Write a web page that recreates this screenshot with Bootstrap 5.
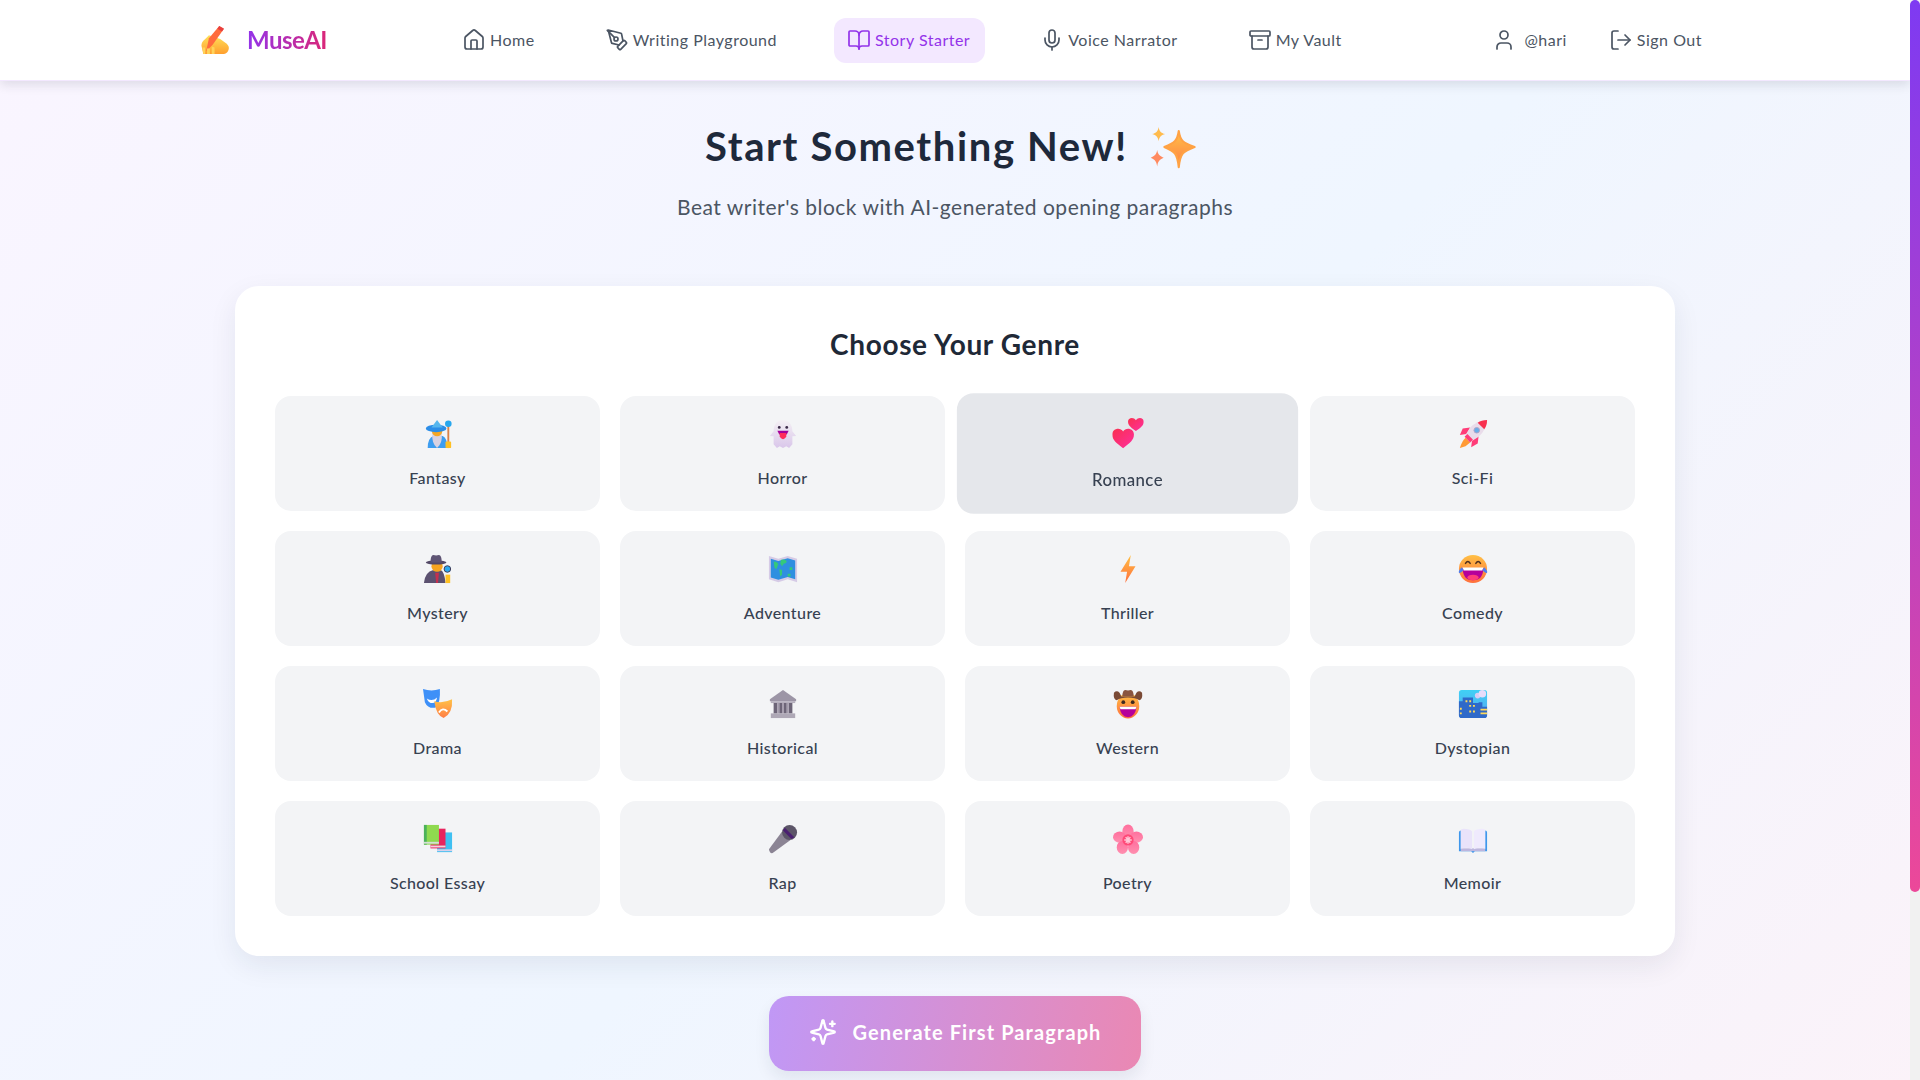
<!DOCTYPE html>
<html lang="en">
<head>
<meta charset="utf-8">
<title>MuseAI</title>
<link href="https://cdn.jsdelivr.net/npm/bootstrap@5.3.0/dist/css/bootstrap.min.css" rel="stylesheet">
<style>
::-webkit-scrollbar{display:none}
body{font-family:"Lato","Liberation Sans",sans-serif;background:linear-gradient(135deg,#faf5ff 0%,#eff6ff 50%,#fdf2f8 100%);min-height:1308px;color:#1f2937;padding-right:10px}
.svg-defs{position:absolute;width:0;height:0}
.scroll-rail{position:fixed;top:0;right:0;bottom:0;width:10px;background:#f1f1f1;z-index:10}
.scroll-thumb{height:892px;border-radius:5px;background:linear-gradient(180deg,#7e3af2,#ec4899)}
.top-bar{height:81px;background:#fff;border-bottom:1px solid #f3e8ff;box-shadow:0 4px 10px rgba(30,41,59,.12);position:relative}
.bar-inner{max-width:1536px;height:80px;padding:0 6px 0 13px}
.brand-mark{width:31px;height:30px}
.brand-word{font-size:24px;font-weight:700;letter-spacing:-.5px;background:linear-gradient(90deg,#9333ea,#db2777);-webkit-background-clip:text;background-clip:text;color:transparent;line-height:1}
.menu-group{gap:42px}
.user-group{gap:14px}
.menu-link{display:flex;align-items:center;gap:4px;height:45px;padding:0 15px 0 13px;border-radius:12px;color:#4b5563;font-size:16px;letter-spacing:.5px;text-decoration:none;white-space:nowrap}
.menu-link svg{width:24px;height:24px;flex:none}
.menu-link.is-current{background:#f3e8ff;color:#9333ea}
.page-head{padding-top:35px;height:205px}
.page-title{font-size:40px;font-weight:700;line-height:60px;color:#1e293b;margin:0;letter-spacing:1.6px}
.page-title svg{width:46px;height:46px;margin:0 9px 0 22px;vertical-align:-9px}
.page-sub{font-size:21px;letter-spacing:.5px;line-height:28px;color:#4b5563;margin:17px 0 0}
.genre-panel{width:1440px;background:#fff;border-radius:24px;padding:40px;box-shadow:0 10px 28px rgba(30,41,59,.08)}
.panel-title{font-size:28px;font-weight:700;letter-spacing:.65px;line-height:36px;margin:0 0 34px;color:#1f2937;text-align:center}
.genre-grid{display:grid;grid-template-columns:repeat(4,1fr);gap:20px}
.genre-tile{height:115px;background:#f3f4f6;border:0;border-radius:16px;padding:23px 0 0;display:flex;flex-direction:column;align-items:center;color:#374151;font-size:16px;font-weight:500;letter-spacing:.4px}
.genre-tile svg{width:30px;height:30px;flex:none}
.genre-tile span{line-height:24px;margin-top:17px}
.genre-tile.is-hover{background:#e5e7eb;transform:scale(1.05)}
.go-btn{display:flex;align-items:center;justify-content:center;gap:16px;width:372px;height:75px;margin:40px auto 236px;padding:0 0 3px;border:0;border-radius:20px;background:linear-gradient(100deg,#c098f6,#ea88b3);color:#fff;font-size:20px;font-weight:700;letter-spacing:1.1px;box-shadow:0 8px 16px rgba(30,41,59,.08)}
.go-btn svg{width:28px;height:28px}
</style>
</head>
<body>
<svg class="svg-defs" aria-hidden="true"><defs>
<linearGradient id="gY" x1="0" y1="0" x2="0" y2="1"><stop offset="0" stop-color="#ffe15a"/><stop offset="1" stop-color="#ff9f2e"/></linearGradient>
<linearGradient id="gO" x1="0" y1="0" x2="0" y2="1"><stop offset="0" stop-color="#ffc045"/><stop offset="1" stop-color="#ff6f3c"/></linearGradient>
<linearGradient id="gH" x1="0" y1="0" x2="1" y2="1"><stop offset="0" stop-color="#f9304f"/><stop offset="1" stop-color="#ff2fa0"/></linearGradient>
<linearGradient id="gG" x1="0" y1="0" x2="0" y2="1"><stop offset="0" stop-color="#f4f0f4"/><stop offset="1" stop-color="#d9c6ea"/></linearGradient>
<linearGradient id="gP" x1="0" y1="0" x2="0" y2="1"><stop offset="0" stop-color="#ff6f9d"/><stop offset="1" stop-color="#ff8fb0"/></linearGradient>
<linearGradient id="gS" x1="0" y1="0" x2="0" y2="1"><stop offset="0" stop-color="#ffc247"/><stop offset="1" stop-color="#ff7d45"/></linearGradient>
<linearGradient id="gB" x1="0" y1="0" x2="0" y2="1"><stop offset="0" stop-color="#3fd0f5"/><stop offset="1" stop-color="#5aa5f0"/></linearGradient>
</defs></svg>

<div class="scroll-rail"><div class="scroll-thumb"></div></div>

<nav class="top-bar">
  <div class="bar-inner mx-auto d-flex align-items-center justify-content-between">
    <a class="d-flex align-items-center gap-3 text-decoration-none" href="#">
      <svg class="brand-mark" viewBox="0 0 32 32"><path d="M3 31 1 22q0-4 4-7l4-4 12 4 7 5q3 3 2 6-1 4-5 5H8Z" fill="url(#gY)"/><path d="M6 28 9 14 20 1l5 3-12 17Z" fill="#ff6b3d"/><path d="M20 1l5 3-2 3-5-3Z" fill="#e83f3f"/><path d="M2 24h3v7H3Zm5 1h3v6H7Zm5-2 3 1v7h-3Z" fill="#ffd35a"/></svg>
      <span class="brand-word">MuseAI</span>
    </a>
    <div class="menu-group d-flex align-items-center">
      <a class="menu-link" href="#"><svg viewBox="0 0 24 24" fill="none" stroke="currentColor" stroke-width="1.700" stroke-linecap="round" stroke-linejoin="round"><path d="M15 21v-8a1 1 0 0 0-1-1h-4a1 1 0 0 0-1 1v8"/><path d="M3 10a2 2 0 0 1 .7-1.5l7-6a2 2 0 0 1 2.600 0l7 6A2 2 0 0 1 21 10v9a2 2 0 0 1-2 2H5a2 2 0 0 1-2-2z"/></svg>Home</a>
      <a class="menu-link" href="#"><svg viewBox="0 0 24 24" fill="none" stroke="currentColor" stroke-width="1.700" stroke-linecap="round" stroke-linejoin="round"><path d="M15.700 21.300a1 1 0 0 1-1.400 0l-1.600-1.600a1 1 0 0 1 0-1.400l5.600-5.600a1 1 0 0 1 1.400 0l1.600 1.600a1 1 0 0 1 0 1.400z"/><path d="m18 13-1.400-6.900a1 1 0 0 0-.7-.8L3.200 2l3.300 12.700a1 1 0 0 0 .8.7L14 17"/><path d="m2.300 2.300 7.300 7.300"/><circle cx="11" cy="11" r="2"/></svg>Writing Playground</a>
      <a class="menu-link is-current" href="#"><svg viewBox="0 0 24 24" fill="none" stroke="currentColor" stroke-width="1.700" stroke-linecap="round" stroke-linejoin="round"><path d="M12 7v14"/><path d="M3 18a1 1 0 0 1-1-1V4a1 1 0 0 1 1-1h5a4 4 0 0 1 4 4 4 4 0 0 1 4-4h5a1 1 0 0 1 1 1v13a1 1 0 0 1-1 1h-6a3 3 0 0 0-3 3 3 3 0 0 0-3-3z"/></svg>Story Starter</a>
      <a class="menu-link" href="#"><svg viewBox="0 0 24 24" fill="none" stroke="currentColor" stroke-width="1.700" stroke-linecap="round" stroke-linejoin="round"><path d="M12 2a3 3 0 0 0-3 3v7a3 3 0 0 0 6 0V5a3 3 0 0 0-3-3Z"/><path d="M19 10v2a7 7 0 0 1-14 0v-2"/><path d="M12 19v3"/></svg>Voice Narrator</a>
      <a class="menu-link" href="#"><svg viewBox="0 0 24 24" fill="none" stroke="currentColor" stroke-width="1.700" stroke-linecap="round" stroke-linejoin="round"><rect x="2" y="3" width="20" height="5" rx="1"/><path d="M4 8v11a2 2 0 0 0 2 2h12a2 2 0 0 0 2-2V8"/><path d="M10 12h4"/></svg>My Vault</a>
    </div>
    <div class="user-group d-flex align-items-center">
      <a class="menu-link" href="#"><svg viewBox="0 0 24 24" fill="none" stroke="currentColor" stroke-width="1.700" stroke-linecap="round" stroke-linejoin="round"><path d="M19 21v-2a4 4 0 0 0-4-4H9a4 4 0 0 0-4 4v2"/><circle cx="12" cy="7" r="4"/></svg>&nbsp;@hari</a>
      <a class="menu-link" href="#"><svg viewBox="0 0 24 24" fill="none" stroke="currentColor" stroke-width="1.700" stroke-linecap="round" stroke-linejoin="round"><path d="M9 21H5a2 2 0 0 1-2-2V5a2 2 0 0 1 2-2h4"/><path d="m16 17 5-5-5-5"/><path d="M21 12H9"/></svg>Sign Out</a>
    </div>
  </div>
</nav>

<main>
  <header class="page-head text-center">
    <h1 class="page-title">Start Something New!<svg viewBox="0 0 32 32"><path d="M20 5c1 7 3 8 11 11-8 3-10 4-11 14-1-10-3-11-10-14 7-3 9-4 10-11Z" fill="url(#gS)" stroke="#ffa244" stroke-width="1.500" stroke-linejoin="round"/><path d="M6 2c.5 3 1.500 4 4.500 5-3 1-4 2-4.500 5-.5-3-1.500-4-4.500-5 3-1 4-2 4.500-5Z" fill="#ffbb4d"/><path d="M5 18c.5 3 1.500 4 4.500 5.500-3 1.500-4 2.500-4.500 6-.5-3.500-1.500-4.500-4.500-6 3-1.500 4-2.500 4.500-5.500Z" fill="#ff8a60"/></svg></h1>
    <p class="page-sub">Beat writer's block with AI-generated opening paragraphs</p>
  </header>

  <section class="genre-panel mx-auto">
    <h2 class="panel-title">Choose Your Genre</h2>
    <div class="genre-grid">
      <button class="genre-tile" type="button"><svg viewBox="0 0 32 32"><path d="M5 31q0-11 6-13h10q5 2 5 13Z" fill="#3d9df0"/><path d="M10 15q-1 11 5 16 6-5 5-16Z" fill="#d8d2e2"/><circle cx="15" cy="13" r="5.500" fill="#f6a623"/><ellipse cx="14" cy="10" rx="11" ry="4" fill="#2b8de8"/><path d="M9 9 15 1l6 8Z" fill="#55b6ee"/><rect x="26" y="6" width="2" height="25" fill="#d9824a"/><circle cx="27" cy="5" r="3.500" fill="#27a7ee"/><rect x="24" y="24" width="6" height="7" rx="1" fill="#ffc022"/></svg><span>Fantasy</span></button>
      <button class="genre-tile" type="button"><svg viewBox="0 0 32 32"><path d="M16 1C9 1 6 7 6 13l-4 5 4 .5V27l3.500 4 3-2 3.500 2 3.500-2 3 2L26 27v-8.500l4-.5-4-5C26 7 23 1 16 1Z" fill="url(#gG)"/><circle cx="12" cy="9" r="1.500" fill="#3b2a48"/><circle cx="20" cy="9" r="1.500" fill="#3b2a48"/><path d="M10 12.500h12l-2 4H12Z" fill="#a3009c"/><path d="M12.500 15h7v4q-3.500 5-7 0Z" fill="#ff2c5c"/></svg><span>Horror</span></button>
      <button class="genre-tile is-hover" type="button"><svg viewBox="0 0 32 32"><path d="M11 31.500C4 26 0 23 0 17.500c0-6 8-8 11-3 3-5 11-3 11 3 0 5.500-4 8.500-11 14Z" fill="url(#gH)"/><path d="M24 14c-4-3-8-5.500-8-9.500 0-4 5.500-5 8-1.500 2.500-3.500 8-2.500 8 1.500 0 4-4 6.500-8 9.500Z" fill="url(#gH)"/></svg><span>Romance</span></button>
      <button class="genre-tile" type="button"><svg viewBox="0 0 32 32"><path d="M13 9 5 10l-3 7 7-1Z" fill="#ff3c78"/><path d="M22 18l-1 8-7 4 1-7Z" fill="#ff3c78"/><path d="M31 1Q20 2 13 9L8 17l6 7 8-5q8-7 9-18Z" fill="#e9dcea"/><path d="M31 1q-6 0-10 3l7 7q3-4 3-10Z" fill="#f8304f"/><circle cx="20" cy="12" r="3" fill="#6aaee8" stroke="#b4a4c6"/><path d="M8 20l5 5-5 4-6 2Q4 24 8 20Z" fill="#ff9a35"/><path d="M10 16l6 6-3 3-6-6Z" fill="#ff3c78"/></svg><span>Sci-Fi</span></button>

      <button class="genre-tile" type="button"><svg viewBox="0 0 32 32"><path d="M1 31q1-12 10-14h8q4 2 5 14Z" fill="#5b5170"/><circle cx="15" cy="13" r="6" fill="#f6a41f"/><path d="M13 20h4l-1 11h-2Z" fill="#c4304e"/><ellipse cx="14" cy="9" rx="11" ry="2.300" fill="#524866"/><path d="M8 9q0-8 3-8 3 1 6 0 3 0 3 8Z" fill="#5e5474"/><circle cx="26" cy="16" r="3.500" fill="#2ba8ee" stroke="#3c3550"/><rect x="24" y="22" width="5" height="9" fill="#ffc022"/></svg><span>Mystery</span></button>
      <button class="genre-tile" type="button"><svg viewBox="0 0 32 32"><path d="M1 2l10 3 10-3 10 3v25l-10-3-10 3-10-3Z" fill="#d6cbe6"/><path d="M3 5l8 2.500 10-3 8 2.500v20l-8-2.500-10 3L3 25Z" fill="#2f8fe0"/><path d="M6 8q4 0 5 3l-2 5-2-1Zm8-2q5-1 6 2-1 3-3 2l-2 3-2-3Zm-2 10 3 1v5l-2 2Zm9 5h3v3h-3Zm2-7h3v3h-3Z" fill="#35c97a"/></svg><span>Adventure</span></button>
      <button class="genre-tile" type="button"><svg viewBox="0 0 32 32"><path d="M19 1 8 19h7l-2 12 11-18h-7Z" fill="url(#gO)"/></svg><span>Thriller</span></button>
      <button class="genre-tile" type="button"><svg viewBox="0 0 32 32"><circle cx="16" cy="16" r="15" fill="url(#gO)"/><path d="M5 15h22q0 13-11 13T5 15Z" fill="#b5009b"/><path d="M5 14.500h22l-1 3H6Z" fill="#fff"/><ellipse cx="16" cy="25" rx="6" ry="3" fill="#ff3d7a"/><path d="M8 10q2.500-4 5 0m6 0q2.500-4 5 0" fill="none" stroke="#51301f" stroke-width="1.600" stroke-linecap="round"/><path d="M4 14q-4 4-3 6 2 1 5-3Zm24 0q4 4 3 6-2 1-5-3Z" fill="#4f7df0"/></svg><span>Comedy</span></button>

      <button class="genre-tile" type="button"><svg viewBox="0 0 32 32"><path d="M0 0q9 3 18 0 1 15-5 20-8 1-11-6Z" fill="#3e90f8"/><path d="M4 10q6 4 11-1-1 6-5 6-4 0-6-5Z" fill="#fff"/><path d="M12 13q9 3 19-2 1 15-9 20-8-3-10-18Z" fill="url(#gS)"/><path d="M17 25q4-6 9-1" fill="none" stroke="#fff" stroke-width="2"/></svg><span>Drama</span></button>
      <button class="genre-tile" type="button"><svg viewBox="0 0 32 32"><path d="M16 1 2 11v2h28v-2Z" fill="#9c95a6"/><rect x="3" y="13" width="26" height="2" fill="#b5afbd"/><path d="M6 15h4v11H6Zm6 0h3v11h-3Zm5 0h3v11h-3Zm5 0h4v11h-4Z" fill="#6d6578"/><path d="M10 15h2v11h-2Zm5 0h2v11h-2Zm5 0h2v11h-2Z" fill="#a39bac"/><rect x="3" y="26" width="26" height="5" fill="#aea8b6"/></svg><span>Historical</span></button>
      <button class="genre-tile" type="button"><svg viewBox="0 0 32 32"><ellipse cx="16" cy="18" rx="12" ry="13.500" fill="url(#gO)"/><path d="M1 4q3-3 6 0l2 4h14l2-4q3-3 6 0 1 7-3 8-4-3-12-3T4 12Q0 11 1 4Z" fill="#7a4a36"/><path d="M10 8q0-7 3-7 3 1 6 0 3 0 3 7Z" fill="#8a5540"/><circle cx="11" cy="14" r="2" fill="#402a20"/><circle cx="21" cy="14" r="2" fill="#402a20"/><path d="M7 19h18q-1 11-9 11T7 19Z" fill="#b5009b"/><path d="M7 19h18l-1 2.500H8Z" fill="#fff"/></svg><span>Western</span></button>
      <button class="genre-tile" type="button"><svg viewBox="0 0 32 32"><rect x="1" y="1" width="30" height="30" rx="3" fill="url(#gB)"/><circle cx="21" cy="7" r="3" fill="#d8cdf5"/><circle cx="26" cy="5" r="4" fill="#e6dcfa"/><path d="M1 13h4V9h11v6h6v-1h4v5h5v9q0 3-3 3H4q-3 0-3-3Z" fill="#2f69c9"/><path d="M8 12h2v2H8Zm4 0h2v2h-2Zm0 5h2v2h-2Zm4 0h2v2h-2Zm-4 6h2v2h-2Zm4 0h2v2h-2ZM2 20h2v2H2Zm0 5h2v2H2Zm22-4h7v2h-7Zm0 4h7v2h-7Z" fill="#ffd95a"/></svg><span>Dystopian</span></button>

      <button class="genre-tile" type="button"><svg viewBox="0 0 32 32"><rect x="15" y="9" width="16" height="21" fill="#3fc0f2"/><rect x="15" y="27" width="16" height="2" fill="#d8d0ea"/><rect x="8" y="5" width="16" height="21" fill="#e8245f"/><rect x="8" y="23" width="16" height="2" fill="#f1d3dc"/><rect x="1" y="1" width="16" height="21" fill="#8fd94f"/><rect x="1" y="1" width="3" height="21" fill="#4bb25a"/><rect x="1" y="19" width="16" height="2" fill="#d5dfd5"/></svg><span>School Essay</span></button>
      <button class="genre-tile" type="button"><svg viewBox="0 0 32 32"><path d="M1 27 15 8l9 9L5 31q-3 1-4-4Z" fill="#8b8494"/><circle cx="23" cy="9" r="8" fill="#5c5568"/><path d="m16 7 9 9 3-2-10-10Z" fill="#4a1f70"/></svg><span>Rap</span></button>
      <button class="genre-tile" type="button"><svg viewBox="0 0 32 32"><g fill="url(#gP)"><ellipse cx="16" cy="8" rx="6" ry="7.500"/><ellipse cx="7" cy="14" rx="7" ry="6"/><ellipse cx="25" cy="14" rx="7" ry="6"/><ellipse cx="10" cy="25" rx="6" ry="7"/><ellipse cx="22" cy="25" rx="6" ry="7"/></g><circle cx="16" cy="17" r="6" fill="#ff4a78"/><path d="M16 13v8m-4-4h8m-6.500-3 5 6m0-6-5 6" stroke="#ffc7d8" stroke-width="1.500"/></svg><span>Poetry</span></button>
      <button class="genre-tile" type="button"><svg viewBox="0 0 32 32"><path d="M1 9q0-2 2-2v20h26V7q2 0 2 2v20H18l-2 2-2-2H1Z" fill="#3f97ec"/><path d="M3 29h26v-3H3Z" fill="#bcb6de"/><path d="M3 7q0-2 3-2 7 0 9 3v19q-3-3-12-1Z" fill="#e9e3fa"/><path d="M29 7q0-2-3-2-7 0-9 3v19q3-3 12-1Z" fill="#efeafd"/></svg><span>Memoir</span></button>
    </div>
  </section>

  <button class="go-btn" type="button"><svg viewBox="0 0 24 24" fill="none" stroke="currentColor" stroke-width="2" stroke-linecap="round" stroke-linejoin="round"><path d="M9.900 15.500A2 2 0 0 0 8.500 14.100L2.400 12.500a.5.500 0 0 1 0-1L8.500 9.900A2 2 0 0 0 9.900 8.500l1.600-6.100a.5.500 0 0 1 1 0l1.600 6.100a2 2 0 0 0 1.400 1.400l6.100 1.600a.5.500 0 0 1 0 1l-6.100 1.600a2 2 0 0 0-1.400 1.400l-1.600 6.100a.5.500 0 0 1-1 0Z"/><path d="M20 3v4"/><path d="M22 5h-4"/><path d="M4 17v2"/><path d="M5 18H3"/></svg>Generate First Paragraph</button>
</main>
</body>
</html>
